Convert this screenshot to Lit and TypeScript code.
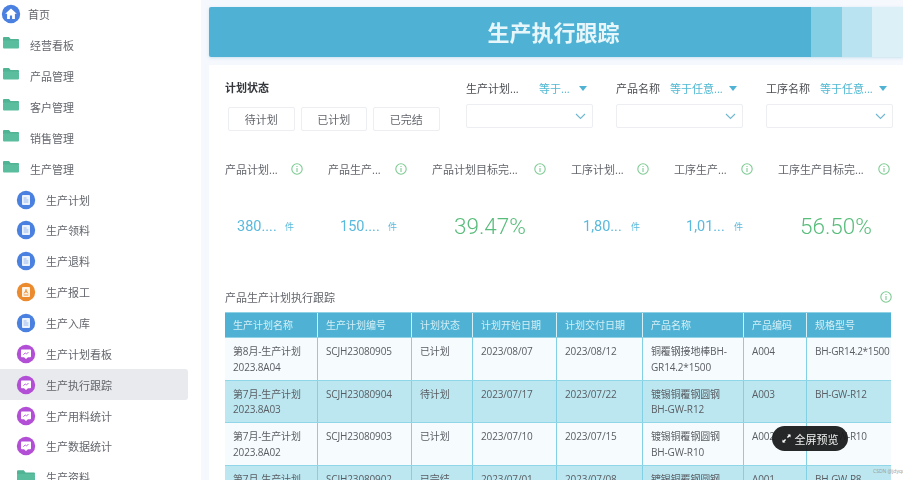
import { LitElement, html, css, svg } from "lit";
import { customElement } from "lit/decorators.js";

const FONT = css`"Open Sans", "Noto Sans CJK SC", sans-serif`;
const NUM = css`Roboto, "Noto Sans CJK SC", sans-serif`;

const home = svg`<circle cx="9" cy="9" r="9.2" fill="#4a80e0"/><path d="M9 3.4 3.2 8.8h1.9v5.2h2.8v-3.4h2.2v3.4h2.8V8.8h1.9z" fill="#fff"/>`;
const folder = svg`<path d="M1 0h5l1.6 2H15a1 1 0 0 1 1 1v1H0V1a1 1 0 0 1 1-1z" fill="#4fb394"/><rect y="3.4" width="16" height="8.2" rx="1" fill="#5abd9e"/>`;
const doc = (c: string) => svg`<circle cx="9" cy="9" r="9.2" fill="${c}"/><rect x="5" y="4" width="8" height="10" rx="1" fill="#fff" opacity=".9"/><path d="M6.6 7h3M6.6 9h4.8M6.6 11h4.8" stroke="${c}" stroke-width=".9" opacity=".55"/>`;
const report = svg`<circle cx="9" cy="9" r="9.2" fill="#ec8a2e"/><rect x="5" y="4" width="8" height="10" rx="1" fill="#fff" opacity=".9"/><path d="M9 6v4M6.6 12h4.8M7 10.5 9 7.5l2 3" stroke="#ec8a2e" stroke-width=".9" fill="none"/>`;
const screen = svg`<circle cx="9" cy="9" r="9.2" fill="#b34fd6"/><path d="M4.8 4.6h8.4a.8.8 0 0 1 .8.8v6a.8.8 0 0 1-.8.8H11l-2 1.8-2-1.8H4.8a.8.8 0 0 1-.8-.8v-6a.8.8 0 0 1 .8-.8z" fill="#fff"/><path d="M6.4 9.6 8.2 8l1.3 1 2-2" stroke="#b34fd6" stroke-width=".9" fill="none"/>`;

type Nav = { t: string; i: any; sub?: boolean; top?: boolean; folder?: boolean; on?: boolean };
const nav: Nav[] = [
  { t: "首页", i: home, top: true },
  { t: "经营看板", i: folder, folder: true },
  { t: "产品管理", i: folder, folder: true },
  { t: "客户管理", i: folder, folder: true },
  { t: "销售管理", i: folder, folder: true },
  { t: "生产管理", i: folder, folder: true },
  { t: "生产计划", i: doc("#4a80e0"), sub: true },
  { t: "生产领料", i: doc("#4a80e0"), sub: true },
  { t: "生产退料", i: doc("#4a80e0"), sub: true },
  { t: "生产报工", i: report, sub: true },
  { t: "生产入库", i: doc("#4a80e0"), sub: true },
  { t: "生产计划看板", i: screen, sub: true },
  { t: "生产执行跟踪", i: screen, sub: true, on: true },
  { t: "生产用料统计", i: screen, sub: true },
  { t: "生产数据统计", i: screen, sub: true },
  { t: "生产资料", i: folder, sub: true, folder: true },
];

const kpis = [
  { l: "产品计划...", v: "380....", u: "件" },
  { l: "产品生产...", v: "150....", u: "件" },
  { l: "产品计划目标完...", v: "39.47%", big: true },
  { l: "工序计划...", v: "1,80...", u: "件" },
  { l: "工序生产...", v: "1,01...", u: "件" },
  { l: "工序生产目标完...", v: "56.50%", big: true },
];

const heads = ["生产计划名称", "生产计划编号", "计划状态", "计划开始日期", "计划交付日期", "产品名称", "产品编码", "规格型号"];
const rows = [
  ["第8月-生产计划 2023.8A04", "SCJH23080905", "已计划", "2023/08/07", "2023/08/12", "铜覆钢接地棒BH-GR14.2*1500", "A004", "BH-GR14.2*1500"],
  ["第7月-生产计划 2023.8A03", "SCJH23080904", "待计划", "2023/07/17", "2023/07/22", "镀锡铜覆钢圆钢 BH-GW-R12", "A003", "BH-GW-R12"],
  ["第7月-生产计划 2023.8A02", "SCJH23080903", "已计划", "2023/07/10", "2023/07/15", "镀锡铜覆钢圆钢 BH-GW-R10", "A002", "BH-GW-R10"],
  ["第7月-生产计划 2023.8A01", "SCJH23080902", "已完结", "2023/07/01", "2023/07/08", "镀锡铜覆钢圆钢 BH-GW-R8", "A001", "BH-GW-R8"],
];

const info = html`<svg class="info" viewBox="0 0 12 12"><circle cx="6" cy="6" r="5.2" fill="none" stroke="#7fcb94" stroke-width="1.1"/><path d="M6 3v1.1M6 5.1v3.9" stroke="#7fcb94" stroke-width="1.1"/></svg>`;

@customElement("app-root")
export class AppRoot extends LitElement {
  static styles = css`
    :host { display: block; width: 903px; height: 482px; overflow: hidden; background: #fff; font-family: ${FONT}; }
    * { box-sizing: border-box; }
    .wrap { position: relative; width: 903px; height: 482px; overflow: hidden; }
    .page { display: flex; width: 903px; height: 480px; overflow: hidden; background: #f5f8fd; filter: blur(0.55px); }
    .side { width: 201px; flex: none; background: #fff; margin-top: 0; }
    .side-in { margin-top: -1px; }
    .nav { display: flex; align-items: center; height: 30.87px; width: 188px; font-size: 11px; color: #63666c; border-radius: 0 3px 3px 0; }
    .nav svg { width: 18px; height: 18px; flex: none; overflow: visible; }
    .nav.top { padding-left: 2px; gap: 8px; }
    .nav.fold { padding-left: 3px; gap: 11px; }
    .nav.fold svg { width: 16px; height: 12px; margin-top: -4px; }
    .nav.sub { padding-left: 17px; gap: 11px; }
    .nav.sub.fold svg { width: 18px; height: 14px; margin-top: 0; }
    .nav.on { background: #e9eaee; }
    .main { flex: 1; min-width: 0; padding: 7px 0 0 8px; display: flex; flex-direction: column; gap: 8px; }
    .banner { height: 50px; flex: none; display: grid; grid-template-columns: 1fr 31px 30px 31px; background: #4fb2d4; border-radius: 2px 0 0 2px; box-shadow: 0 1px 3px rgba(80,160,200,.25); }
    .banner h1 { margin: 0; color: #e6f6fa; font-size: 22px; font-weight: 600; display: flex; align-items: center; justify-content: center; padding: 0 0 2px 87px; }
    .s1 { background: #84cfe3; } .s2 { background: #b9e3f0; } .s3 { background: #dcf1f7; }
    .card { flex: 1; background: #fff; padding: 15px 10px 0 16px; }
    .filters { display: flex; height: 66px; }
    .state { width: 241px; flex: none; }
    .label { font-size: 11px; color: #3f4348; line-height: 16px; }
    .state .label { font-weight: 700; color: #33363a; }
    .btns { display: flex; gap: 6px; margin: 11px 0 0 3px; }
    .btn { width: 66.5px; height: 24px; border: 1px solid #eceef1; border-radius: 2px; font-size: 11px; color: #63666c; display: flex; align-items: center; justify-content: center; }
    .filter { width: 127px; margin-right: 23px; flex: none; }
    .f-top { display: flex; align-items: center; height: 16px; font-size: 11px; color: #4a4d52; }
    .f-top .n { flex: none; width: 54px; white-space: nowrap; overflow: hidden; }
    .f-top .op { color: #4fb8d2; margin-left: 19px; white-space: nowrap; }
    .f-top.long .n { width: 44px; }
    .f-top.long .op { margin-left: 10px; }
    .caret { margin-left: auto; margin-right: 6px; width: 0; height: 0; border: 4.5px solid transparent; border-top: 5px solid #4fb2d4; border-bottom: 0; }
    .input { margin-top: 8px; height: 24px; border: 1px solid #eceef1; border-radius: 2px; display: flex; align-items: center; justify-content: flex-end; padding-right: 6px; }
    .input svg { width: 11px; height: 7px; }
    .kpis { display: grid; grid-template-columns: 103px 104px 139px 103px 104px 1fr; margin-top: 15px; }
    .kpi-l { display: flex; align-items: center; justify-content: space-between; height: 16px; padding-right: 25px; font-size: 11px; color: #63666c; white-space: nowrap; }
    .kpi:last-child .kpi-l { padding-right: 3px; }
    .info { width: 12px; height: 12px; flex: none; }
    .kpi-v { display: flex; align-items: center; height: 36px; margin-top: 31px; padding-left: 12px; color: #5ab9dc; font-family: ${NUM}; font-size: 14.5px; white-space: nowrap; }
    .kpi-v b { font-weight: 400; width: 39px; flex: none; }
    .kpi-v small { font-size: 9px; margin-left: 9px; }
    .kpi-v.big { font-size: 22.5px; color: #58bc7b; padding-left: 22px; }
    .kpi-v.big b { width: auto; font-weight: 300; }
    .t-title { display: flex; justify-content: space-between; align-items: center; margin-top: 45px; padding-right: 1px; font-size: 11px; color: #63666c; height: 16px; }
    .table { margin-top: 7px; width: 666px; border-top: 1px solid #8fd2e6; }
    .row { display: grid; grid-template-columns: 93px 94px 61px 84px 86px 101px 63px 84px; height: 42.6px; background: #f6fcfe; border-bottom: 1.5px solid #8fd7e8; font-size: 10px; letter-spacing: -0.15px; color: #5a5d63; line-height: 15.5px; }
    .row.alt { background: #bce7f0; }
    .row.head { height: 25px; background: #4fb2d4; color: #d3eff6; border-bottom: 1px solid #8fd2e6; line-height: 24px; letter-spacing: 0; }
    .cell { padding: 6px 2px 0 8px; border-right: 1.5px solid #82d0e4; overflow: hidden; }
    .cell:nth-child(6) { padding-right: 12px; }
    .cell:last-child { border-right: 0; white-space: nowrap; overflow: visible; letter-spacing: -0.3px; }
    .head .cell { padding-top: 0; border-right-color: #d6f0f6; white-space: nowrap; }
    .head .cell:last-child { letter-spacing: 0; }
    .pill { position: absolute; left: 772px; top: 426px; width: 76px; height: 25px; border-radius: 12.5px; background: rgba(24,25,27,.94); color: #f0f0f0; font-size: 11px; display: flex; align-items: center; justify-content: center; gap: 4px; filter: blur(0.35px); }
    .pill svg { width: 9px; height: 9px; }
    .mark { position: absolute; left: 873px; top: 468px; font-size: 5px; color: #9a9a9a; white-space: nowrap; }
  `;

  private renderFilter(n: string, op: string, long: boolean) {
    return html`<div class="filter">
      <div class="f-top ${long ? "long" : ""}"><span class="n">${n}</span><span class="op">${op}</span><span class="caret"></span></div>
      <div class="input"><svg viewBox="0 0 11 7"><path d="M1 1l4.5 4.5L10 1" fill="none" stroke="#6fb7d0" stroke-width="1.1"/></svg></div>
    </div>`;
  }

  render() {
    return html`<div class="wrap">
      <div class="page">
        <aside class="side"><div class="side-in">
          ${nav.map((n) => html`<div class="nav ${n.top ? "top" : ""} ${n.folder ? "fold" : ""} ${n.sub ? "sub" : ""} ${n.on ? "on" : ""}">
            <svg viewBox=${n.folder ? "0 0 16 12" : "0 0 18 18"}>${n.i}</svg><span>${n.t}</span>
          </div>`)}
        </div></aside>
        <main class="main">
          <div class="banner"><h1>生产执行跟踪</h1><i class="s1"></i><i class="s2"></i><i class="s3"></i></div>
          <section class="card">
            <div class="filters">
              <div class="state">
                <div class="label">计划状态</div>
                <div class="btns"><div class="btn">待计划</div><div class="btn">已计划</div><div class="btn">已完结</div></div>
              </div>
              ${this.renderFilter("生产计划...", "等于...", false)}
              ${this.renderFilter("产品名称", "等于任意...", true)}
              ${this.renderFilter("工序名称", "等于任意...", true)}
            </div>
            <div class="kpis">
              ${kpis.map((k) => html`<div class="kpi">
                <div class="kpi-l"><span>${k.l}</span>${info}</div>
                <div class="kpi-v ${k.big ? "big" : ""}"><b>${k.v}</b>${k.u ? html`<small>${k.u}</small>` : ""}</div>
              </div>`)}
            </div>
            <div class="t-title"><span>产品生产计划执行跟踪</span>${info}</div>
            <div class="table">
              <div class="row head">${heads.map((h) => html`<div class="cell">${h}</div>`)}</div>
              ${rows.map((r, i) => html`<div class="row ${i % 2 ? "alt" : ""}">${r.map((c) => html`<div class="cell">${c}</div>`)}</div>`)}
            </div>
          </section>
        </main>
      </div>
      <div class="pill"><svg viewBox="0 0 9 9"><path d="M1 8l2.6-2.6M8 1 5.4 3.6" stroke="#fff" stroke-width="1.4"/><path d="M.5 8.5v-3l3 3zM8.5.5v3l-3-3z" fill="#fff"/></svg>全屏预览</div>
      <div class="mark">CSDN @jdyqqq</div>
    </div>`;
  }
}
